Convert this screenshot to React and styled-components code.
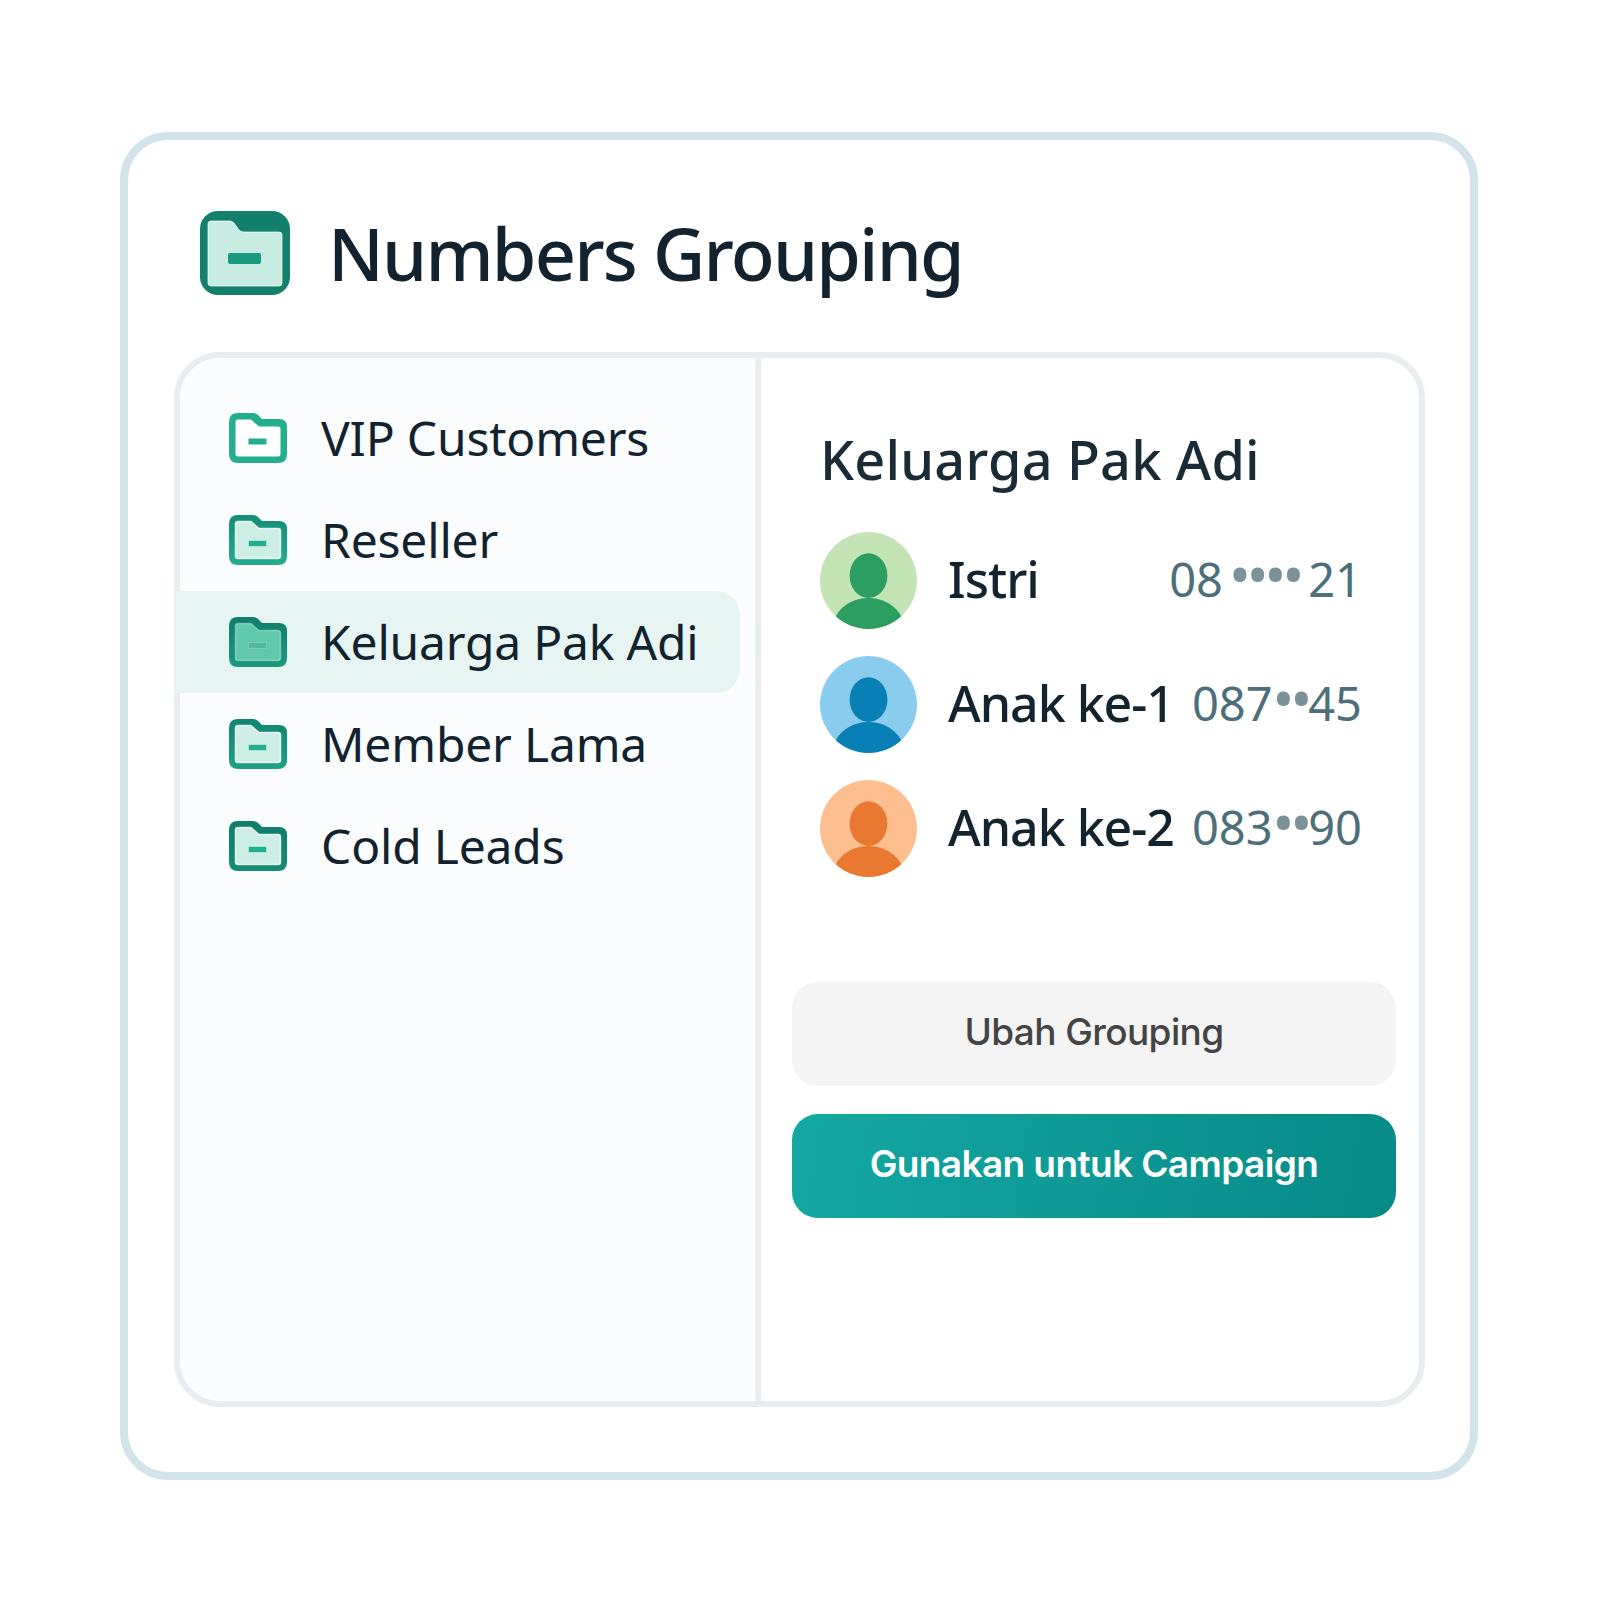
import React from 'react';
import styled, { createGlobalStyle } from 'styled-components';

const GlobalStyle = createGlobalStyle`
  * { box-sizing: border-box; }
  body {
    margin: 0;
    background: #ffffff;
    font-family: "Noto Sans", "Liberation Sans", sans-serif;
  }
`;

const groups = [
  { name: 'VIP Customers', tone: 'outline' },
  { name: 'Reseller', tone: 'light' },
  { name: 'Keluarga Pak Adi', tone: 'active', active: true },
  { name: 'Member Lama', tone: 'lightDark' },
  { name: 'Cold Leads', tone: 'dark' },
];

const contacts = [
  { id: 'green', name: 'Istri', start: '08', dots: '••••', end: '21', wide: true, light: '#c3e5b6', dark: '#2b9e60' },
  { id: 'blue', name: 'Anak ke-1', start: '087', dots: '••', end: '45', light: '#8accee', dark: '#0880b6' },
  { id: 'orange', name: 'Anak ke-2', start: '083', dots: '••', end: '90', light: '#fdbf8f', dark: '#e97831' },
];

const tones = {
  outline: { top: '#23ae8d', bottom: '#23ae8d', fill: '#ffffff', bar: '#23ae8d', halo: 0 },
  light: { top: '#148d76', bottom: '#23ae8d', fill: '#cdeee5', bar: '#23ae8d', halo: 0.8 },
  active: { top: '#0f7d69', bottom: '#1a9a80', fill: '#62c8ac', bar: '#52b89c', halo: 0.35 },
  lightDark: { top: '#0f8570', bottom: '#1fa287', fill: '#cdeee5', bar: '#23ae8d', halo: 0.8 },
  dark: { top: '#0f7d69', bottom: '#148d76', fill: '#cdeee5', bar: '#23ae8d', halo: 0.8 },
};

const FolderIcon = ({ tone }) => {
  const c = tones[tone];
  return (
    <svg width="58" height="50" viewBox="0 0 58 50">
      <defs>
        <linearGradient id={`edge-${tone}`} x1="0" y1="0" x2="0" y2="1">
          <stop offset="0" stopColor={c.top} />
          <stop offset="1" stopColor={c.bottom} />
        </linearGradient>
      </defs>
      <path
        d="M9 0H24Q27 0 29 2L33 6H50Q58 6 58 14V41Q58 50 49 50H9Q0 50 0 41V9Q0 0 9 0Z"
        fill={`url(#edge-${tone})`}
      />
      <path
        d="M9 6.500H22L30 13.500H49Q51.500 13.500 51.500 16V41Q51.500 43.500 49 43.500H9Q6.500 43.500 6.500 41V9Q6.500 6.500 9 6.500Z"
        fill={c.fill}
        stroke="#ffffff"
        strokeWidth="1.500"
        strokeOpacity={c.halo}
      />
      <rect x="19.500" y="25.500" width="18" height="6" fill={c.bar} stroke="#ffffff" strokeOpacity={c.halo * 0.5} />
    </svg>
  );
};

const HeaderIcon = () => (
  <svg width="90" height="84" viewBox="0 0 90 84">
    <rect width="90" height="84" rx="18" fill="#12806c" />
    <path
      d="M11 10H30Q32 10 34 12L39 19Q41 21 44 21H79Q82 21 82 24V72Q82 75 79 75H11Q8 75 8 72V13Q8 10 11 10Z"
      fill="#c8ece2"
      stroke="#ffffff"
      strokeOpacity="0.7"
    />
    <rect x="28" y="42" width="33" height="11" rx="2" fill="#1a9a80" />
  </svg>
);

const Avatar = ({ id, light, dark }) => (
  <svg width="97" height="97" viewBox="0 0 100 100">
    <defs>
      <clipPath id={`avatar-${id}`}>
        <circle cx="50" cy="50" r="50" />
      </clipPath>
    </defs>
    <circle cx="50" cy="50" r="50" fill={light} />
    <ellipse cx="50" cy="45" rx="19.500" ry="23" fill={dark} />
    <g clipPath={`url(#avatar-${id})`}>
      <ellipse cx="50" cy="100" rx="37" ry="32" fill={dark} />
    </g>
  </svg>
);

const App = () => (
  <>
    <GlobalStyle />
    <Page>
      <Card>
        <Header>
          <HeaderIcon />
          <Title>Numbers Grouping</Title>
        </Header>
        <Panel>
          <Sidebar>
            {groups.map((group) => (
              <GroupRow key={group.name} $active={group.active}>
                <FolderIcon tone={group.tone} />
                <GroupName>{group.name}</GroupName>
              </GroupRow>
            ))}
          </Sidebar>
          <Detail>
            <DetailTitle>Keluarga Pak Adi</DetailTitle>
            <ContactList>
              {contacts.map((contact) => (
                <ContactRow key={contact.id}>
                  <Avatar id={contact.id} light={contact.light} dark={contact.dark} />
                  <ContactName>{contact.name}</ContactName>
                  <Phone>
                    {contact.start}
                    <Dots $wide={contact.wide}>{contact.dots}</Dots>
                    {contact.end}
                  </Phone>
                </ContactRow>
              ))}
            </ContactList>
            <Actions>
              <SecondaryButton>Ubah Grouping</SecondaryButton>
              <PrimaryButton>Gunakan untuk Campaign</PrimaryButton>
            </Actions>
          </Detail>
        </Panel>
      </Card>
    </Page>
  </>
);

const Page = styled.div`
  width: 1600px;
  height: 1600px;
  padding: 132px 122px 120px 120px;
`;

const Card = styled.div`
  height: 1348px;
  padding: 71px 45px 65px 46px;
  border: 8px solid #d2e4ea;
  border-radius: 48px;
  background: #ffffff;
`;

const Header = styled.div`
  display: flex;
  align-items: center;
  gap: 38px;
  padding-left: 26px;
  height: 84px;
`;

const Title = styled.h1`
  margin: 0;
  font-size: 72px;
  font-weight: 500;
  letter-spacing: -1.800px;
  color: #12232f;
`;

const Panel = styled.div`
  display: grid;
  grid-template-columns: 581px 1fr;
  height: 1055px;
  margin-top: 57px;
  border: 6px solid #e7edf1;
  border-radius: 46px;
`;

const Sidebar = styled.div`
  display: flex;
  flex-direction: column;
  padding: 29px 15px 0 0;
  border-right: 6px solid #e7edf1;
  border-radius: 40px 0 0 40px;
  background: #fbfcfe;
`;

const GroupRow = styled.div`
  display: flex;
  align-items: center;
  gap: 34px;
  height: 102px;
  margin-left: -6px;
  padding-left: 55px;
  border-radius: 0 24px 24px 0;
  background: ${(p) => (p.$active ? '#e6f5f2' : 'transparent')};
`;

const GroupName = styled.span`
  position: relative;
  top: -1px;
  font-size: 48px;
  letter-spacing: -0.200px;
  color: #12232f;
`;

const Detail = styled.div`
  padding: 70px 23px 0 31px;
`;

const DetailTitle = styled.h2`
  margin: 0 0 0 28px;
  font-size: 54px;
  line-height: 62px;
  font-weight: 500;
  letter-spacing: 0.200px;
  color: #1b2b36;
`;

const ContactList = styled.div`
  display: flex;
  flex-direction: column;
  gap: 27px;
  margin-top: 42px;
  padding: 0 34px 0 28px;
`;

const ContactRow = styled.div`
  display: flex;
  align-items: center;
  height: 97px;
`;

const ContactName = styled.span`
  position: relative;
  top: -2px;
  margin-left: 31px;
  font-size: 50px;
  font-weight: 500;
  letter-spacing: -1px;
  color: #13242f;
`;

const Phone = styled.span`
  position: relative;
  top: -2px;
  margin-left: auto;
  font-size: 47px;
  line-height: 64px;
  color: #4d6f7a;
`;

const Dots = styled.span`
  position: relative;
  top: -1px;
  margin: 0 ${(p) => (p.$wide ? '8px' : '0')} 0 ${(p) => (p.$wide ? '6px' : '0')};
  font-size: 58px;
  line-height: 0;
  letter-spacing: -4px;
  color: #7b9299;
`;

const Actions = styled.div`
  display: flex;
  flex-direction: column;
  gap: 28px;
  margin-top: 105px;
`;

const ActionButton = styled.button`
  height: 104px;
  padding: 0 0 6px;
  border: 0;
  border-radius: 26px;
  font-family: Inter, "Liberation Sans", sans-serif;
  font-size: 37px;
  letter-spacing: -0.600px;
`;

const SecondaryButton = styled(ActionButton)`
  background: #f4f4f4;
  color: #444444;
  font-weight: 500;
`;

const PrimaryButton = styled(ActionButton)`
  background: linear-gradient(100deg, #13a8a3, #078a86);
  color: #ffffff;
  font-weight: 600;
`;

export default App;
